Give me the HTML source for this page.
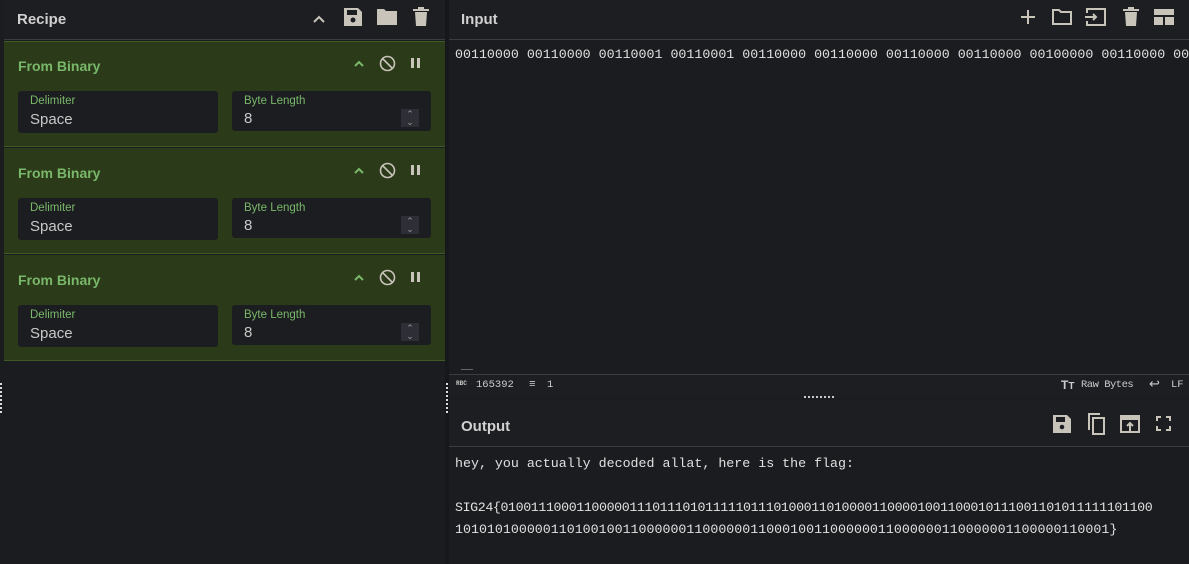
<!DOCTYPE html><html><head><style>
*{margin:0;padding:0;box-sizing:border-box}
body{width:1189px;height:564px;background:#1b1c1f;font-family:"Liberation Sans",sans-serif;position:relative;overflow:hidden}
.a{position:absolute}
.hdr{color:#d0d0d0;font-weight:bold;font-size:15px}
.op{position:absolute;left:4px;width:441px;height:106px;background:#2b3a18;border-bottom:1px solid #3f5a22}
.f{position:absolute;background:#1c1d20;border-radius:3px}
.f .l{position:absolute;left:12px;top:4px;font-size:11.5px;color:#79b86a}
.f .v{position:absolute;left:12px;top:20px;font-size:15px;color:#c8c8c8}
.mono{font-family:"Liberation Mono",monospace;font-size:13.3px;color:#e0e0e0;white-space:pre}
svg{position:absolute}
</style></head><body>
<div class="a" style="left:4px;top:0;width:441px;height:40px;background:#1d1e21;border-bottom:1px solid #3a3c40"></div>
<div class="a hdr" style="left:17px;top:11px">Recipe</div>
<svg style="left:311px;top:11px" width="16" height="16" viewBox="0 0 16 16"><path d="M3 11l5-5 5 5" stroke="#c8c4ba" stroke-width="2" fill="none"/></svg>
<svg style="left:343px;top:7px" width="20" height="20" viewBox="0 0 20 20"><path d="M1 1h14l4 4v14H1z" fill="#c8c4ba"/><rect x="4" y="3" width="10" height="5" fill="#1d1e21"/><circle cx="10" cy="13" r="2.5" fill="#1d1e21"/></svg>
<svg style="left:376px;top:8px" width="22" height="18" viewBox="0 0 22 18"><path d="M1 1h7l2 2h11v14H1z" fill="#c8c4ba"/></svg>
<svg style="left:412px;top:7px" width="18" height="20" viewBox="0 0 18 20"><rect x="1" y="2" width="16" height="2" fill="#c8c4ba"/><rect x="6" y="0" width="6" height="2" fill="#c8c4ba"/><path d="M3 5h12l-1 14H4z" fill="#c8c4ba"/></svg>

<div class="op" style="top:41px;border-top:1px solid #3f5a22"></div>
<div class="op" style="top:148px"></div>
<div class="op" style="top:255px"></div>
<div id="ops"></div>

<div class="a" style="left:445px;top:0;width:4px;height:564px;background:#16171a"></div>
<div class="a" style="left:0;top:383px;width:2px;height:30px;border-left:2px dotted #ddd"></div>
<div class="a" style="left:446px;top:383px;width:2px;height:30px;border-left:2px dotted #ddd"></div>

<div class="a" style="left:449px;top:0;width:740px;height:40px;background:#1d1e21;border-bottom:1px solid #3a3c40"></div>
<div class="a hdr" style="left:461px;top:11px">Input</div>
<svg style="left:1019px;top:8px" width="18" height="18"><path d="M9 2v14M2 9h14" stroke="#c8c4ba" stroke-width="2"/></svg>
<svg style="left:1051px;top:8px" width="22" height="18"><path d="M2 2h6l2 2h10v12H2z" stroke="#c8c4ba" stroke-width="2" fill="none"/></svg>
<svg style="left:1084px;top:7px" width="24" height="20"><path d="M3 6V2h18v16H3v-4M1 10h11M9 7l3 3-3 3" stroke="#c8c4ba" stroke-width="2" fill="none"/></svg>
<svg style="left:1122px;top:7px" width="18" height="20"><rect x="1" y="2" width="16" height="2" fill="#c8c4ba"/><rect x="6" y="0" width="6" height="2" fill="#c8c4ba"/><path d="M3 5h12l-1 14H4z" fill="#c8c4ba"/></svg>
<svg style="left:1154px;top:9px" width="20" height="16"><rect x="0" y="0" width="20" height="6" fill="#c8c4ba"/><rect x="0" y="8" width="9" height="8" fill="#c8c4ba"/><rect x="11" y="8" width="9" height="8" fill="#c8c4ba"/></svg>
<div class="a mono" style="left:455px;top:47px">00110000 00110000 00110001 00110001 00110000 00110000 00110000 00110000 00100000 00110000 00110000</div>
<div class="a" style="left:461px;top:369px;width:12px;height:1px;background:#666"></div>
<div class="a" style="left:449px;top:374px;width:740px;height:22px;background:#1d1e21;border-top:1px solid #3a3c40;font-family:'Liberation Mono',monospace;font-size:10.5px;color:#ccc">
<span class="a" style="left:7px;top:5px;font-size:6px;font-weight:bold">RBC</span><span class="a" style="left:27px;top:4px">165392</span>
<span class="a" style="left:80px;top:4px;font-size:11px">≡</span><span class="a" style="left:98px;top:4px">1</span>
<span class="a" style="left:612px;top:3px;font-weight:bold;font-size:12px;font-family:'Liberation Sans'">T<small>T</small></span><span class="a" style="left:632px;top:4px;letter-spacing:-0.5px">Raw Bytes</span>
<span class="a" style="left:700px;top:2px;font-size:13px">↩</span><span class="a" style="left:722px;top:4px">LF</span></div>
<div class="a" style="left:804px;top:396px;width:30px;height:3px;border-top:2px dotted #ccc"></div>
<div class="a" style="left:449px;top:400px;width:740px;height:47px;background:#1d1e21;border-bottom:1px solid #3a3c40"></div>
<div class="a hdr" style="left:461px;top:418px">Output</div>
<svg style="left:1053px;top:415px" width="18" height="18"><path d="M0 0h14l4 4v14H0z" fill="#c8c4ba"/><rect x="3" y="2" width="9" height="5" fill="#1d1e21"/><circle cx="9" cy="12" r="2.3" fill="#1d1e21"/></svg>
<svg style="left:1086px;top:413px" width="20" height="22"><path d="M3 17V1h11" stroke="#c8c4ba" stroke-width="2" fill="none"/><rect x="7" y="5" width="11" height="16" stroke="#c8c4ba" stroke-width="2" fill="none"/></svg>
<svg style="left:1120px;top:415px" width="20" height="18"><rect x="1" y="1" width="18" height="16" stroke="#c8c4ba" stroke-width="2" fill="none"/><rect x="1" y="1" width="18" height="4" fill="#c8c4ba"/><path d="M10 16V9M7 11l3-3 3 3" stroke="#c8c4ba" stroke-width="2" fill="none"/></svg>
<svg style="left:1156px;top:416px" width="15" height="15"><path d="M1 5V1h4M10 1h4v4M14 10v4h-4M5 14H1v-4" stroke="#c8c4ba" stroke-width="2" fill="none"/></svg>
<div class="a mono" style="left:455px;top:453px;line-height:22px">hey, you actually decoded allat, here is the flag:

<span style="letter-spacing:-0.4px">SIG24{01001110001100000111011101011111011101000110100001100001001100010111001101011111101100</span>
1010101000001101001001100000011000000110001001100000011000000110000001100000110001}</div>
<script>
var h='';[41,148,255].forEach(function(t){h+='<div class="a" style="left:4px;top:'+t+'px;width:441px;height:106px">'+
'<div class="a" style="left:14px;top:17px;color:#79b86a;font-weight:bold;font-size:14px">From Binary</div>'+
'<svg style="left:349px;top:17px" width="12" height="10"><path d="M2 8l4-4 4 4" stroke="#79b86a" stroke-width="2" fill="none"/></svg>'+
'<svg style="left:375px;top:14px" width="17" height="17"><circle cx="8.5" cy="8.5" r="7" stroke="#c8c4ba" stroke-width="1.6" fill="none"/><path d="M4 4l9 9" stroke="#c8c4ba" stroke-width="1.6"/></svg>'+
'<svg style="left:406px;top:16px" width="12" height="12"><rect x="1" y="1" width="3" height="10" fill="#c8c4ba"/><rect x="7" y="1" width="3" height="10" fill="#c8c4ba"/></svg>'+
'<div class="f" style="left:14px;top:50px;width:200px;height:42px"><div class="l">Delimiter</div><div class="v">Space</div></div>'+
'<div class="f" style="left:228px;top:50px;width:199px;height:40px"><div class="l">Byte Length</div><div class="v" style="top:19px">8</div>'+
'<div class="a" style="left:169px;top:18px;width:18px;height:18px;background:#2e2f36;color:#999;font-size:9px;line-height:8px;text-align:center;padding-top:1px">&#8963;<br>&#8964;</div></div></div>';});
document.getElementById('ops').innerHTML=h;
</script>
</body></html>
